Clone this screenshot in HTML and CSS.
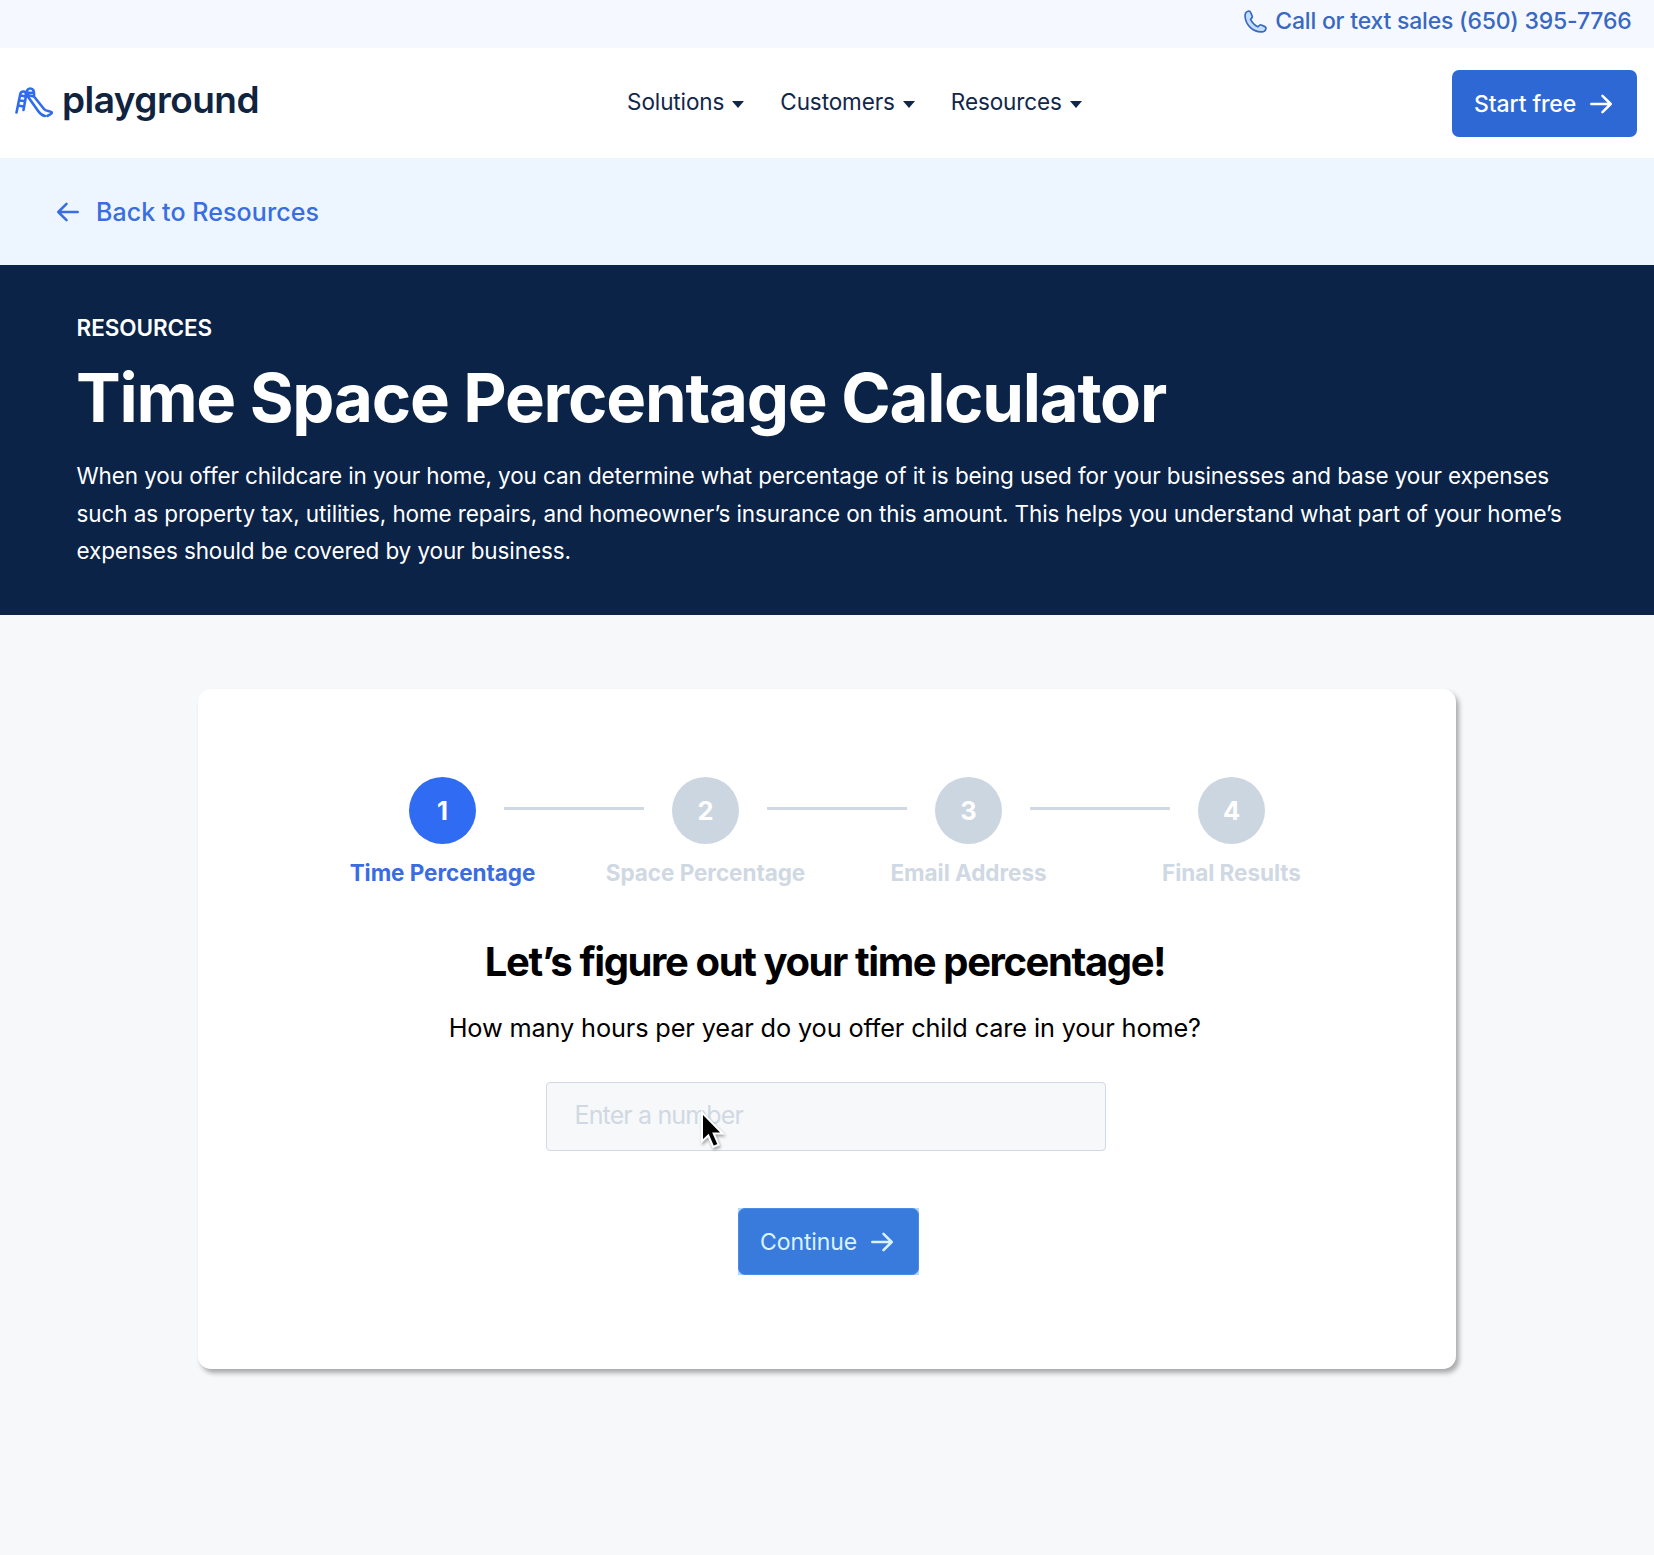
FILE: index.html
```html
<!DOCTYPE html>
<html lang="en">
<head>
<meta charset="utf-8">
<title>Time Space Percentage Calculator</title>
<link rel="stylesheet" href="styles.css">
</head>
<body>
<div class="topbar">
  <a class="phone">
    <svg class="phone-icon" viewBox="0 0 22 22"><path d="M4.5 1 C2.3 1.4 1 3.2 1 5.5 C1.3 14 8 20.7 16.5 21 C19 21 20.7 19.6 21 17.5 C21.1 16.7 20.7 16.2 20 15.9 L16.6 14.3 C16 14 15.3 14.1 14.9 14.6 L13.3 16 C10 14.6 7.8 12.2 6.3 9 L7.6 7.3 C8 6.8 8 6.2 7.8 5.7 L6.2 2 C5.9 1.2 5.3.9 4.5 1Z"/></svg>
    <span>Call or text sales (650) 395-7766</span>
  </a>
</div>
<header class="nav">
  <a class="logo">
    <svg class="logo-icon" viewBox="0 0 38 32"><path d="M1.500 25.500L5.300 7C6 4 10.500 3.500 10.800 6.500V10L8.500 23M5.500 8.500L11 9.500M4 13.500L9.500 14M3 18.500L8.500 19.500M12.500 8C11 4 12.500 1.500 15 1.500C18.500 1.300 19.300 4 19 9.500M13 5.500L18.500 6M12.500 8L18.500 9.500M12.500 9L23.500 24.500C25.500 27.500 27.500 28.500 30 29M19 9.500L29 22C31 24.500 34 23.500 37 25.500C36.500 27.500 34.500 27.500 32.500 28.800"/></svg>
    <span class="logo-text">playground</span>
  </a>
  <nav class="menu">
    <a class="menu-item">Solutions<i class="caret"></i></a>
    <a class="menu-item">Customers<i class="caret"></i></a>
    <a class="menu-item">Resources<i class="caret"></i></a>
  </nav>
  <a class="btn start"><span>Start free</span><svg class="arrow" viewBox="0 0 22 20"><path d="M1.300 10H20.500M12.500 1.800L20.700 10L12.500 18.200"/></svg></a>
</header>
<div class="backbar">
  <svg class="arrow" viewBox="0 0 22 20"><path d="M20.700 10H1.500M9.500 1.800L1.300 10L9.500 18.200"/></svg>
  <span>Back to Resources</span>
</div>
<section class="hero">
  <div class="eyebrow">RESOURCES</div>
  <h1>Time Space Percentage Calculator</h1>
  <p>When you offer childcare in your home, you can determine what percentage of it is being used for your businesses and base your expenses such as property tax, utilities, home repairs, and homeowner’s insurance on this amount. This helps you understand what part of your home’s expenses should be covered by your business.</p>
</section>
<main class="card">
  <ol class="steps">
    <li class="step active"><b class="dot">1</b><span class="label">Time Percentage</span></li>
    <li class="step"><b class="dot">2</b><span class="label">Space Percentage</span></li>
    <li class="step"><b class="dot">3</b><span class="label">Email Address</span></li>
    <li class="step"><b class="dot">4</b><span class="label">Final Results</span></li>
  </ol>
  <h2>Let’s figure out your time percentage!</h2>
  <div class="question">How many hours per year do you offer child care in your home?</div>
  <div class="field">Enter a number
    <svg class="cursor" viewBox="0 0 24 40"><path d="M2 2.500V31.500L8.300 25.500L13.200 37L18.600 34.700L13.700 23.500H22.500Z"/></svg>
  </div>
  <div class="continue-wrap"><a class="btn continue"><span>Continue</span><svg class="arrow" viewBox="0 0 22 20"><path d="M1.300 10H20.500M12.500 1.800L20.700 10L12.500 18.200"/></svg></a></div>
</main>
</body>
</html>
```
FILE: styles.css
```css
* { box-sizing: border-box; }
body { margin: 0; width: 1654px; height: 1555px; overflow: hidden; background: #f7f8fa; font-family: Inter, "Liberation Sans", sans-serif; color: #10264a; }
svg { display: block; flex: none; }
.arrow { width: 22px; height: 20px; fill: none; stroke: currentColor; stroke-width: 2.5; stroke-linecap: round; stroke-linejoin: round; }

/* Top bar and navigation */
.topbar { height: 48px; background: #f5f9ff; display: flex; justify-content: flex-end; padding-right: 22.5px; }
.phone { display: flex; align-items: center; gap: 8px; height: 42px; font-size: 23px; font-weight: 450; letter-spacing: -.2px; color: #3868c2; white-space: nowrap; }
.phone-icon { width: 23px; height: 23px; fill: #c3defb; stroke: #3868c2; stroke-width: 1.6; }
.nav { height: 110px; background: #fff; display: flex; align-items: center; justify-content: space-between; padding: 0 17px 0 15px; }
.logo { display: flex; align-items: center; gap: 9px; }
.logo-icon { width: 38px; height: 32px; fill: none; stroke: #2f6bee; stroke-width: 2.6; stroke-linecap: round; stroke-linejoin: round; }
.logo-text { font-size: 37px; font-weight: 600; letter-spacing: -.55px; line-height: 44px; color: #10243f; margin-bottom: 6px; }
.menu { display: flex; gap: 37px; font-size: 22.5px; letter-spacing: -.1px; margin-right: 3px; margin-bottom: 2.5px; }
.menu-item { display: flex; align-items: center; gap: 8px; }
.caret { border: 6.5px solid transparent; border-top: 7px solid #10264a; border-bottom: 0; margin-top: 6px; margin-right: -1px; }
.btn { display: inline-flex; align-items: center; gap: 14px; height: 67px; border-radius: 7px; font-size: 23px; color: #fff; }
.start { width: 185px; padding: 1px 0 0 22px; background: #2e68d5; font-weight: 450; letter-spacing: -.12px; }
.backbar { height: 107px; background: #edf5ff; display: flex; align-items: center; gap: 17px; padding-left: 57px; font-size: 25px; font-weight: 450; letter-spacing: .08px; color: #396de0; }

/* Hero */
.hero { height: 350px; background: #0a2347; color: #fff; padding: 48px 76px 0; }
.eyebrow { font-size: 22.5px; line-height: 28px; font-weight: 600; letter-spacing: -.08px; padding: .6px 0 0 .6px; }
h1 { margin: 11.4px 0 0; font-size: 67px; line-height: 90px; font-weight: 700; letter-spacing: -1.22px; }
p { margin: 13.8px -10px 0 0; font-size: 22.5px; letter-spacing: -.1px; line-height: 37.8px; padding-left: .5px; }

/* Calculator card */
.card { width: 1258px; height: 680px; margin: 74px 0 0 198px; background: #fff; border-radius: 13px; padding-top: 87.5px; box-shadow: 3px 4px 5px rgba(0,0,0,.32); }
.steps { list-style: none; margin: 0 0 0 113px; padding: 0; display: grid; grid-template-columns: repeat(4, 263px); }
.step { display: flex; flex-direction: column; align-items: center; color: #cfd8e3; position: relative; }
.dot { width: 67px; height: 67px; border-radius: 50%; background: #ccd6e1; color: #fff; font-size: 25.5px; display: flex; align-items: center; justify-content: center; padding-top: 1px; }
.label { font-size: 22.5px; font-weight: 700; letter-spacing: -.05px; line-height: 28px; margin-top: 15.5px; }
.active { color: #396de0; }
.active .dot { background: #306bf3; }
.step:not(:last-child)::after { content: ""; position: absolute; left: 193px; top: 30.5px; width: 140px; height: 3px; background: #cfd8e3; }
h2 { margin: 48px 4px 0 0; font-size: 40px; line-height: 54px; letter-spacing: -1.4px; text-align: center; color: #000; }
.question { margin: 22.5px 4.5px 0 0; text-align: center; font-size: 25.3px; letter-spacing: -.13px; line-height: 32px; color: #000; }
.field { position: relative; width: 560px; height: 69px; margin: 38px 0 0 348px; border: 1.5px solid #d0d9e4; border-radius: 4px; background: #f7f8fa; padding-left: 27.5px; line-height: 65px; font-size: 25px; letter-spacing: -.86px; color: #d0d9e3; }
.cursor { position: absolute; left: 152.5px; top: 27px; width: 24px; height: 40px; overflow: visible; fill: #000; stroke: #fff; stroke-width: 2; filter: drop-shadow(1px 2px 1.5px rgba(0,0,0,.35)); }
.continue-wrap { width: 181px; height: 67px; margin: 57px 0 0 540px; background: #b3d6fb; }
.continue { width: 181px; background: #387bdc; border: 1px solid #4a8ce2; padding: 1px 0 0 21px; font-weight: 430; letter-spacing: -.1px; color: #d9f3ff; }
```
